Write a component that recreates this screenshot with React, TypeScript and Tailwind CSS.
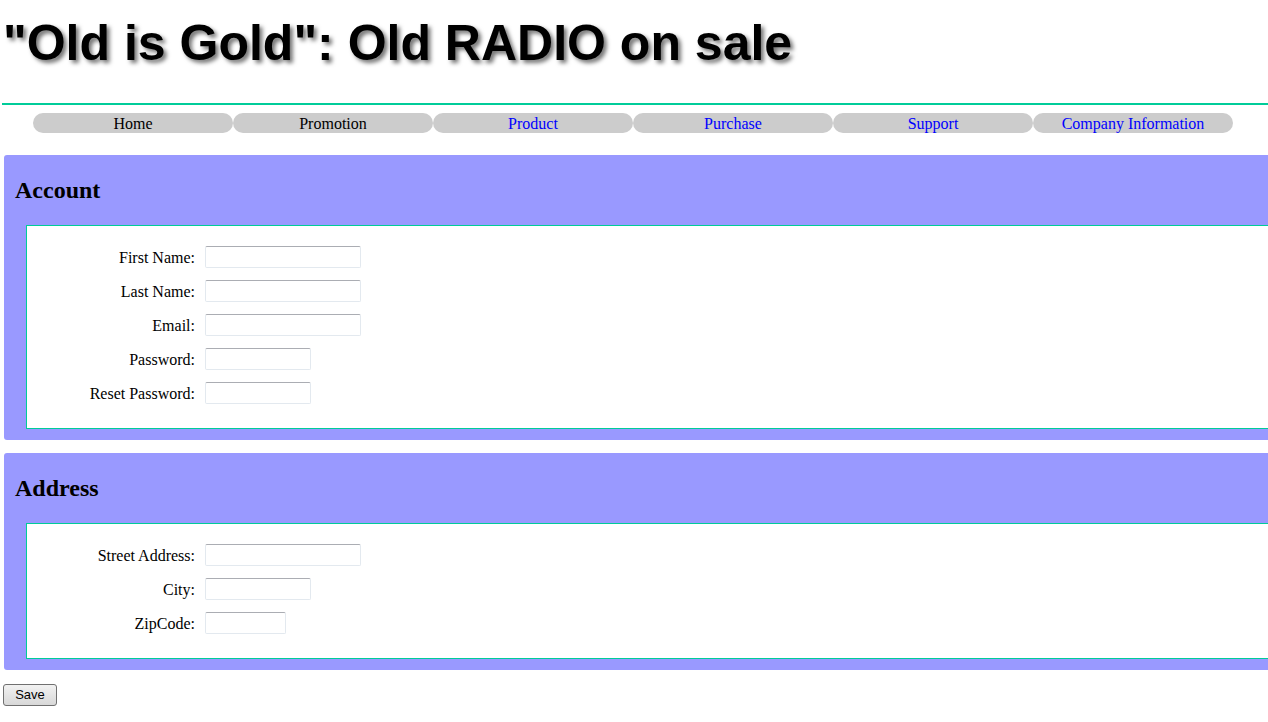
import React from "react";

type Field = { label: string; width: string };

const accountFields: Field[] = [
  { label: "First Name:", width: "w-[156px]" },
  { label: "Last Name:", width: "w-[156px]" },
  { label: "Email:", width: "w-[156px]" },
  { label: "Password:", width: "w-[106px]" },
  { label: "Reset Password:", width: "w-[106px]" },
];

const addressFields: Field[] = [
  { label: "Street Address:", width: "w-[156px]" },
  { label: "City:", width: "w-[106px]" },
  { label: "ZipCode:", width: "w-[81px]" },
];

const navItems = [
  { label: "Home", link: false },
  { label: "Promotion", link: false },
  { label: "Product", link: true },
  { label: "Purchase", link: true },
  { label: "Support", link: true },
  { label: "Company Information", link: true },
];

function FormSection({ title, fields }: { title: string; fields: Field[] }) {
  return (
    <section className="ml-[4px] w-[1300px] rounded-[3px] bg-[#9999ff] pb-[11px]">
      <h2 className="pl-[11px] pt-[21px] pb-[21px] text-[24px] font-bold leading-[28px] text-black">
        {title}
      </h2>
      <div className="ml-[22px] flex flex-col gap-[12px] border border-[#00cc99] bg-white pt-[20px] pb-[24px]">
        {fields.map((f) => (
          <div key={f.label} className="flex items-center">
            <label className="w-[168px] pt-[2px] text-right text-[16px] leading-[20px] text-black">
              {f.label}
            </label>
            <input
              type="text"
              className={`ml-[10px] h-[22px] ${f.width} rounded-[2px] border border-[#e3e9ef] border-t-[#abadb3] bg-white outline-none`}
            />
          </div>
        ))}
      </div>
    </section>
  );
}

export default function App() {
  return (
    <div className="w-full overflow-hidden bg-white pb-[16px] font-['Liberation_Serif',serif]">
      <h1 className="pl-[3px] pt-[15px] pb-[31px] font-['Liberation_Sans',Arial,sans-serif] text-[50px] font-bold leading-[57px] text-black [text-shadow:3px_3px_4px_rgba(0,0,0,0.55)]">
        "Old is Gold": Old RADIO on sale
      </h1>
      <div className="ml-[2px] h-[2px] bg-[#00cc99]" />
      <nav className="ml-[33px] mt-[8px] flex">
        {navItems.map((n) => (
          <div
            key={n.label}
            className={`flex h-[20px] w-[200px] items-center justify-center rounded-full bg-[#cccccc] pt-[1px] text-[16px] leading-[19px] ${
              n.link ? "text-[#0000ff]" : "text-black"
            }`}
          >
            {n.label}
          </div>
        ))}
      </nav>
      <div className="mt-[22px] flex flex-col gap-[13px]">
        <FormSection title="Account" fields={accountFields} />
        <FormSection title="Address" fields={addressFields} />
      </div>
      <button className="ml-[3px] mt-[14px] h-[22px] w-[54px] rounded-[3px] border border-[#707070] bg-gradient-to-b from-[#f2f2f2] to-[#d8d8d8] font-['Liberation_Sans',Arial,sans-serif] text-[13px] leading-[20px] text-black">
        Save
      </button>
    </div>
  );
}
